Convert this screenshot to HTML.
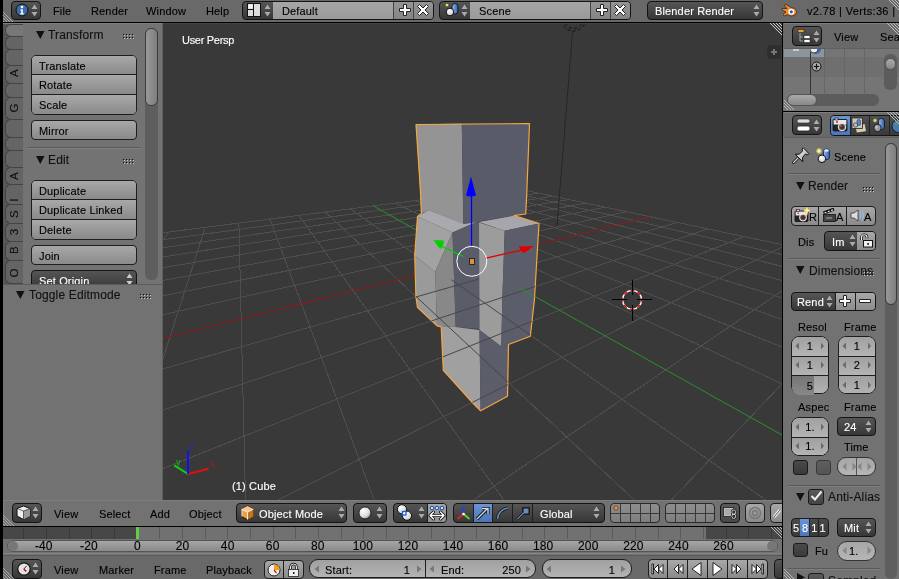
<!DOCTYPE html>
<html><head><meta charset="utf-8">
<style>
*{box-sizing:border-box;margin:0;padding:0}
html,body{width:899px;height:579px;overflow:hidden;background:#000}
body{position:relative;font-family:"Liberation Sans",sans-serif;font-size:11px;color:#000}
.a{position:absolute}
.t{position:absolute;white-space:nowrap;line-height:12px;font-size:11px;letter-spacing:0.15px;-webkit-text-stroke:0.12px currentColor}
.w{color:#fff}
/* widgets */
.btn{position:absolute;border:1px solid #1e1e1e;border-radius:4px;background:linear-gradient(#a8a8a8,#8a8a8a)}
.menu{position:absolute;border:1px solid #141414;border-radius:4px;background:linear-gradient(#555,#373737)}
.num{position:absolute;border:1px solid #1e1e1e;border-radius:9px;background:linear-gradient(#a0a0a0,#b4b4b4)}
.hdr{position:absolute;background:#727272}
.grp{position:absolute;border:1px solid #1e1e1e;border-radius:5px;overflow:hidden;display:flex;flex-direction:column}
.row{background:linear-gradient(#a8a8a8,#8a8a8a);flex:none}
.sep{border-top:1px solid #1e1e1e}
</style></head><body><div id="root" style="position:absolute;left:0;top:0;width:899px;height:579px;will-change:transform">

<!-- ===== top info header ===== -->
<div class="a" style="left:0;top:0;width:899px;height:22px;background:#696969"></div>
<div class="a" style="left:0;top:22px;width:899px;height:1px;background:#000"></div>
<div class="a" style="left:0;top:0;width:3px;height:579px;background:#000"></div>
<!-- corner hatch -->
<svg class="a" style="left:3px;top:10px" width="12" height="12"><path d="M0 2L10 12M0 5L7 12M0 8L4 12M0 11L1 12" stroke="#aaa" stroke-width="1"/></svg>
<!-- info editor button -->
<div class="menu" style="left:11px;top:1px;width:30px;height:19px"></div>
<svg class="a" style="left:15px;top:3px" width="14" height="14"><circle cx="7" cy="7" r="6" fill="#3d6aa8" stroke="#111" stroke-width="1"/><circle cx="7" cy="4" r="1.3" fill="#fff"/><path d="M5.5 6.3h2.3v4h1v1.2h-3.6v-1.2h1v-2.8h-.7z" fill="#fff"/></svg>
<svg class="a" style="left:31px;top:4px" width="7" height="13"><path d="M0.5 5L3.5 0.5L6.5 5z M0.5 8L3.5 12.5L6.5 8z" fill="#aaa"/></svg>
<div class="t" style="left:53px;top:5px">File</div>
<div class="t" style="left:91px;top:5px">Render</div>
<div class="t" style="left:146px;top:5px">Window</div>
<div class="t" style="left:206px;top:5px">Help</div>
<!-- screen layout -->
<div class="menu" style="left:242px;top:1px;width:192px;height:19px"></div>
<div class="a" style="left:273px;top:2px;width:120px;height:17px;background:linear-gradient(#a6a6a6,#9a9a9a)"></div>
<div class="a" style="left:393px;top:2px;width:40px;height:17px;border-radius:0 3px 3px 0;background:linear-gradient(#959595,#848484)"></div>
<div class="a" style="left:413px;top:2px;width:1px;height:17px;background:#444"></div>
<div class="a" style="left:393px;top:2px;width:1px;height:17px;background:#444"></div>
<svg class="a" style="left:247px;top:3px" width="14" height="14"><rect x="0.5" y="0.5" width="6" height="6" fill="#ddd" stroke="#111"/><rect x="0.5" y="6.5" width="6" height="7" fill="#ddd" stroke="#111"/><rect x="6.5" y="0.5" width="7" height="13" fill="#ddd" stroke="#111"/><rect x="1.5" y="1.5" width="4" height="4" fill="#f4f4f4"/></svg>
<svg class="a" style="left:264px;top:4px" width="7" height="13"><path d="M0.5 5L3.5 0.5L6.5 5z M0.5 8L3.5 12.5L6.5 8z" fill="#aaa"/></svg>
<div class="t" style="left:282px;top:5px">Default</div>
<svg class="a" style="left:398px;top:3px" width="14" height="14"><path d="M5.5 1.5h3v4h4v3h-4v4h-3v-4h-4v-3h4z" fill="#fff" stroke="#222" stroke-width="1"/></svg>
<svg class="a" style="left:416px;top:3px" width="14" height="14"><path d="M1.5 3.5L3.5 1.5L7 5L10.5 1.5L12.5 3.5L9 7L12.5 10.5L10.5 12.5L7 9L3.5 12.5L1.5 10.5L5 7z" fill="#fff" stroke="#222" stroke-width="1"/></svg>
<!-- scene -->
<div class="menu" style="left:439px;top:1px;width:192px;height:19px"></div>
<div class="a" style="left:470px;top:2px;width:120px;height:17px;background:linear-gradient(#a6a6a6,#9a9a9a)"></div>
<div class="a" style="left:590px;top:2px;width:40px;height:17px;border-radius:0 3px 3px 0;background:linear-gradient(#959595,#848484)"></div>
<div class="a" style="left:590px;top:2px;width:1px;height:17px;background:#444"></div>
<div class="a" style="left:610px;top:2px;width:1px;height:17px;background:#444"></div>
<svg class="a" style="left:444px;top:2px" width="16" height="16"><defs><linearGradient id="cyl" x1="0" x2="1"><stop offset="0" stop-color="#9cc0f0"/><stop offset="1" stop-color="#2a5ab0"/></linearGradient></defs><circle cx="3" cy="3" r="1.6" fill="#ee6" stroke="#553" stroke-width="0.5"/><rect x="8" y="1.5" width="6" height="10.5" rx="3" fill="url(#cyl)" stroke="#111" stroke-width="0.9"/><circle cx="6" cy="10" r="3.8" fill="url(#wsph)" stroke="#111" stroke-width="1"/></svg>
<svg class="a" style="left:461px;top:4px" width="7" height="13"><path d="M0.5 5L3.5 0.5L6.5 5z M0.5 8L3.5 12.5L6.5 8z" fill="#aaa"/></svg>
<div class="t" style="left:479px;top:5px">Scene</div>
<svg class="a" style="left:595px;top:3px" width="14" height="14"><path d="M5.5 1.5h3v4h4v3h-4v4h-3v-4h-4v-3h4z" fill="#fff" stroke="#222" stroke-width="1"/></svg>
<svg class="a" style="left:613px;top:3px" width="14" height="14"><path d="M1.5 3.5L3.5 1.5L7 5L10.5 1.5L12.5 3.5L9 7L12.5 10.5L10.5 12.5L7 9L3.5 12.5L1.5 10.5L5 7z" fill="#fff" stroke="#222" stroke-width="1"/></svg>
<!-- render engine -->
<div class="menu" style="left:647px;top:1px;width:116px;height:19px"></div>
<div class="t w" style="left:655px;top:5px">Blender Render</div>
<svg class="a" style="left:753px;top:4px" width="7" height="13"><path d="M0.5 5L3.5 0.5L6.5 5z M0.5 8L3.5 12.5L6.5 8z" fill="#aaa"/></svg>
<!-- blender logo -->
<svg class="a" style="left:781px;top:3px" width="17" height="14"><path d="M1 5.5L6 5.5L3 2.5L5 1.5L11 5C15 5 16 8 15.5 10C14.5 13 9 14 6.5 11.5L3.5 13L2 11.5L5 9L1 7z" fill="#f0882a" stroke="#222" stroke-width="0.7"/><circle cx="10.3" cy="8.8" r="3" fill="#fff"/><circle cx="10.3" cy="8.8" r="1.6" fill="#2a5fa8"/></svg>
<div class="t" style="left:807px;top:5px;letter-spacing:0.35px">v2.78 | Verts:36 | </div>
<svg class="a" style="left:887px;top:0px" width="12" height="10"><path d="M2 0L12 10M5 0L12 7M8 0L12 4M11 0L12 1" stroke="#bbb" stroke-width="1"/></svg>

<!-- ===== left tool shelf ===== -->
<div class="a" style="left:3px;top:23px;width:160px;height:477px;background:#727272"></div>
<div class="a" style="left:3px;top:23px;width:160px;height:1px;background:#7e7e7e"></div>
<div class="a" style="left:3px;top:24px;width:20px;height:260px;background:#575757"></div>
<div class="a" style="left:5px;top:24px;width:18px;height:13px;border:1px solid #444;border-right:none;border-radius:6px 0 0 6px;background:#777"></div>
<div class="a" style="left:5px;top:36px;width:18px;height:14px;border:1px solid #444;border-right:none;border-radius:6px 0 0 6px;background:#646464"></div>
<div class="a" style="left:5px;top:49px;width:18px;height:17px;border:1px solid #444;border-right:none;border-radius:6px 0 0 6px;background:#646464"></div>
<div class="a" style="left:5px;top:65px;width:18px;height:19px;border:1px solid #444;border-right:none;border-radius:6px 0 0 6px;background:#646464"></div>
<div class="t" style="left:6px;top:66.5px;width:16px;text-align:center;transform:rotate(-90deg);color:#111;font-size:11.5px">A</div>
<div class="a" style="left:5px;top:83px;width:18px;height:15px;border:1px solid #444;border-right:none;border-radius:6px 0 0 6px;background:#646464"></div>
<div class="a" style="left:5px;top:97px;width:18px;height:23px;border:1px solid #444;border-right:none;border-radius:6px 0 0 6px;background:#646464"></div>
<div class="t" style="left:6px;top:102px;width:16px;text-align:center;transform:rotate(-90deg);color:#111;font-size:11.5px">G</div>
<div class="a" style="left:5px;top:119px;width:18px;height:19px;border:1px solid #444;border-right:none;border-radius:6px 0 0 6px;background:#646464"></div>
<div class="a" style="left:5px;top:137px;width:18px;height:14px;border:1px solid #444;border-right:none;border-radius:6px 0 0 6px;background:#646464"></div>
<div class="a" style="left:5px;top:150px;width:18px;height:18px;border:1px solid #444;border-right:none;border-radius:6px 0 0 6px;background:#646464"></div>
<div class="a" style="left:5px;top:167px;width:18px;height:18px;border:1px solid #444;border-right:none;border-radius:6px 0 0 6px;background:#646464"></div>
<div class="t" style="left:6px;top:170px;width:16px;text-align:center;transform:rotate(-90deg);color:#111;font-size:11.5px">A</div>
<div class="a" style="left:5px;top:184px;width:18px;height:21px;border:1px solid #444;border-right:none;border-radius:6px 0 0 6px;background:#646464"></div>
<div class="t" style="left:6px;top:193.5px;width:16px;text-align:center;transform:rotate(-90deg);color:#111;font-size:11.5px">I</div>
<div class="a" style="left:5px;top:204px;width:18px;height:20px;border:1px solid #444;border-right:none;border-radius:6px 0 0 6px;background:#646464"></div>
<div class="t" style="left:6px;top:208px;width:16px;text-align:center;transform:rotate(-90deg);color:#111;font-size:11.5px">S</div>
<div class="a" style="left:5px;top:223px;width:18px;height:19px;border:1px solid #444;border-right:none;border-radius:6px 0 0 6px;background:#646464"></div>
<div class="t" style="left:6px;top:226px;width:16px;text-align:center;transform:rotate(-90deg);color:#111;font-size:11.5px">3</div>
<div class="a" style="left:5px;top:241px;width:18px;height:20px;border:1px solid #444;border-right:none;border-radius:6px 0 0 6px;background:#646464"></div>
<div class="t" style="left:6px;top:244px;width:16px;text-align:center;transform:rotate(-90deg);color:#111;font-size:11.5px">B</div>
<div class="a" style="left:5px;top:260px;width:18px;height:24px;border:1px solid #444;border-right:none;border-radius:6px 0 0 6px;background:#646464"></div>
<div class="t" style="left:6px;top:267px;width:16px;text-align:center;transform:rotate(-90deg);color:#111;font-size:11.5px">O</div>

<div class="a" style="left:23px;top:24px;width:139px;height:260px;background:#737373"></div>
<div class="a" style="left:162px;top:23px;width:1px;height:477px;background:#606060"></div>
<!-- Transform panel -->
<svg class="a" style="left:36px;top:31px" width="9" height="8"><path d="M0 0H8.5L4.25 8z" fill="#111"/></svg>
<div class="t" style="left:48px;top:29px;font-size:12px;color:#111">Transform</div>
<svg class="a" style="left:123px;top:33px" width="12" height="7"><g fill="#111"><rect x="0" y="1" width="1.2" height="1.2"/><rect x="3" y="1" width="1.2" height="1.2"/><rect x="6" y="1" width="1.2" height="1.2"/><rect x="9" y="1" width="1.2" height="1.2"/><rect x="0" y="4" width="1.2" height="1.2"/><rect x="3" y="4" width="1.2" height="1.2"/><rect x="6" y="4" width="1.2" height="1.2"/><rect x="9" y="4" width="1.2" height="1.2"/></g><g fill="#ccc"><rect x="1" y="2" width="1" height="1"/><rect x="4" y="2" width="1" height="1"/><rect x="7" y="2" width="1" height="1"/><rect x="10" y="2" width="1" height="1"/><rect x="1" y="5" width="1" height="1"/><rect x="4" y="5" width="1" height="1"/><rect x="7" y="5" width="1" height="1"/><rect x="10" y="5" width="1" height="1"/></g></svg>
<div class="grp" style="left:31px;top:55px;width:106px;height:60px">
 <div class="row" style="height:18px"></div><div class="row sep" style="height:20px"></div><div class="row sep" style="height:20px"></div>
</div>
<div class="t" style="left:39px;top:60px">Translate</div>
<div class="t" style="left:39px;top:79px">Rotate</div>
<div class="t" style="left:39px;top:99px">Scale</div>
<div class="btn" style="left:31px;top:120px;width:106px;height:20px"></div>
<div class="t" style="left:39px;top:125px">Mirror</div>
<div class="a" style="left:28px;top:147px;width:112px;height:1px;background:#5a5a5a"></div>
<div class="a" style="left:28px;top:148px;width:112px;height:1px;background:#808080"></div>
<!-- Edit panel -->
<svg class="a" style="left:36px;top:156px" width="9" height="8"><path d="M0 0H8.5L4.25 8z" fill="#111"/></svg>
<div class="t" style="left:48px;top:154px;font-size:12px;color:#111">Edit</div>
<svg class="a" style="left:123px;top:158px" width="12" height="7"><g fill="#111"><rect x="0" y="1" width="1.2" height="1.2"/><rect x="3" y="1" width="1.2" height="1.2"/><rect x="6" y="1" width="1.2" height="1.2"/><rect x="9" y="1" width="1.2" height="1.2"/><rect x="0" y="4" width="1.2" height="1.2"/><rect x="3" y="4" width="1.2" height="1.2"/><rect x="6" y="4" width="1.2" height="1.2"/><rect x="9" y="4" width="1.2" height="1.2"/></g><g fill="#ccc"><rect x="1" y="2" width="1" height="1"/><rect x="4" y="2" width="1" height="1"/><rect x="7" y="2" width="1" height="1"/><rect x="10" y="2" width="1" height="1"/><rect x="1" y="5" width="1" height="1"/><rect x="4" y="5" width="1" height="1"/><rect x="7" y="5" width="1" height="1"/><rect x="10" y="5" width="1" height="1"/></g></svg>
<div class="grp" style="left:31px;top:180px;width:106px;height:60px">
 <div class="row" style="height:18px"></div><div class="row sep" style="height:20px"></div><div class="row sep" style="height:20px"></div>
</div>
<div class="t" style="left:39px;top:185px">Duplicate</div>
<div class="t" style="left:39px;top:204px">Duplicate Linked</div>
<div class="t" style="left:39px;top:224px">Delete</div>
<div class="btn" style="left:31px;top:245px;width:106px;height:20px"></div>
<div class="t" style="left:39px;top:250px">Join</div>
<div class="menu" style="left:31px;top:270px;width:106px;height:20px"></div>
<div class="t w" style="left:39px;top:275px">Set Origin</div>
<svg class="a" style="left:126px;top:273px" width="7" height="13"><path d="M0.5 5L3.5 0.5L6.5 5z M0.5 8L3.5 12.5L6.5 8z" fill="#ccc"/></svg>
<!-- scrollbar -->
<div class="a" style="left:145px;top:28px;width:13px;height:252px;border-radius:6px;background:#5e5e5e"></div>
<div class="a" style="left:145px;top:28px;width:13px;height:78px;border-radius:6px;border:1px solid #3a3a3a;background:linear-gradient(90deg,#999,#7e7e7e)"></div>
<!-- Toggle Editmode (redo panel) -->
<div class="a" style="left:3px;top:284px;width:159px;height:216px;background:#727272"></div>
<div class="a" style="left:3px;top:284px;width:159px;height:1px;background:#5c5c5c"></div>
<svg class="a" style="left:16px;top:291px" width="9" height="8"><path d="M0 0H8.5L4.25 8z" fill="#111"/></svg>
<div class="t" style="left:29px;top:289px;font-size:12px;color:#111">Toggle Editmode</div>
<svg class="a" style="left:140px;top:293px" width="12" height="7"><g fill="#111"><rect x="0" y="1" width="1.2" height="1.2"/><rect x="3" y="1" width="1.2" height="1.2"/><rect x="6" y="1" width="1.2" height="1.2"/><rect x="9" y="1" width="1.2" height="1.2"/><rect x="0" y="4" width="1.2" height="1.2"/><rect x="3" y="4" width="1.2" height="1.2"/><rect x="6" y="4" width="1.2" height="1.2"/><rect x="9" y="4" width="1.2" height="1.2"/></g><g fill="#ccc"><rect x="1" y="2" width="1" height="1"/><rect x="4" y="2" width="1" height="1"/><rect x="7" y="2" width="1" height="1"/><rect x="10" y="2" width="1" height="1"/><rect x="1" y="5" width="1" height="1"/><rect x="4" y="5" width="1" height="1"/><rect x="7" y="5" width="1" height="1"/><rect x="10" y="5" width="1" height="1"/></g></svg>

<!-- ===== viewport ===== -->
<div class="a" style="left:163px;top:23px;width:620px;height:477px;background:#393939;overflow:hidden">
<svg width="620" height="477" viewBox="163 23 620 477" style="position:absolute;left:0;top:0">
 <path d="M1757.2 6826.6L1051.5 301.6M-6567.9 6907.1L128.3 237.2M-1833.3 6861.3L963.4 283.0M-4246.2 6884.6L168.4 232.1M-5423.8 6896.0L892.5 268.0M-1924.6 6862.2L205.2 227.4M-1432.8 1792.2L834.2 255.7M397.1 6839.7L238.9 223.1M-555.5 918.3L785.4 245.3M1360.3 3156.9L270.0 219.1M-282.6 646.5L744.0 236.6M1173.4 1429.1L298.8 215.4M-149.5 513.9L708.4 229.0M1122.1 954.8L325.4 212.0M-70.8 435.5L677.5 222.5M1098.2 733.0L350.2 208.8M18.3 346.8L626.3 211.7M1075.2 520.6L394.9 203.1M45.9 319.2L605.0 207.2M1068.8 461.5L415.2 200.5M67.4 297.9L585.9 203.1M1064.1 417.7L434.1 198.1M84.5 280.9L568.6 199.5M1060.4 383.9L452.0 195.8M98.4 267.0L553.0 196.2M1057.5 357.0L468.8 193.7M110.0 255.4L538.8 193.2M1055.1 335.1L484.7 191.6M119.9 245.6L525.8 190.4M1053.2 316.9L499.7 189.7M128.3 237.2L513.9 187.9M1051.5 301.6L513.9 187.9" stroke="#4e4e4e" stroke-width="1" fill="none" shape-rendering="crispEdges"/>
 <path d="M-18.7 383.6L650.3 216.8" stroke="#8c1a1a" stroke-width="1" fill="none" shape-rendering="crispEdges"/>
 <path d="M1084.3 604.5L373.3 205.9" stroke="#2c8f2c" stroke-width="1" fill="none"/>
 <!-- lamp line -->
 <path d="M572.6 31L557 226" stroke="#262626" stroke-width="1" fill="none"/>
 <circle cx="573.5" cy="19" r="9.5" stroke="#111" stroke-width="1" stroke-dasharray="3 2.5" fill="none"/>
 <circle cx="573.5" cy="19" r="12" stroke="#111" stroke-width="1" stroke-dasharray="3 2.5" fill="none"/>
 <!-- object -->
 <g stroke="none">
  <polygon fill="#949494" points="416,124.5 461.8,123.5 463.3,224 428.4,210 421.4,213.4 420,190"/>
  <polygon fill="#5a5b69" points="461.8,123.5 529.5,123.6 525.7,214 514,215.7 476.6,222 463.3,224"/>
  <polygon fill="#a9a9af" points="417.5,216.5 428.4,210 464,224 476.6,222 452.5,232.4"/>
  <polygon fill="#a2a2a2" points="417.5,216.5 452.5,232.4 435.2,271.9 414.7,255.4"/>
  <polygon fill="#9a9a9a" points="414.7,255.4 435.2,271.9 437.1,325.9 417.4,307.2 415.9,296.5"/>
  <polygon fill="#888888" points="452.5,232.4 455.7,327 437.1,325.9 435.2,271.9"/>
  <polygon fill="#5b5c69" points="452.5,232.4 476.6,222 479.5,222.5 479.5,329 455.7,327"/>
  <polygon fill="#a6a6ac" points="479,222 514,215.7 539,223.5 504.7,230.8"/>
  <polygon fill="#9c9c9c" points="479,222.5 504.7,230.8 502.3,300 501.3,346.6 479.5,330"/>
  <polygon fill="#5c5d6b" points="504.7,230.8 539,223.5 534.4,300 530.3,336.2 508.5,344.5 501.3,346.6 502.3,300"/>
  <polygon fill="#a0a0a0" points="437.1,325.9 455.7,327 479.5,330 480.6,410.8 473.3,403.5 443.3,370.4 441.2,326.9"/>
  <polygon fill="#5c5d6b" points="479.5,330 501.3,346.6 508.5,344.5 507.5,396.3 480.6,410.8"/>
 </g>
 <polygon fill="none" stroke="#f5a742" stroke-width="1.2" stroke-linejoin="round" points="416,124.5 529.5,123.6 526.7,195 525.7,214 514,215.5 539,223.5 534.4,300 530.3,336.2 508.5,344.5 507.5,396.3 480.6,410.8 473.3,403.5 443.3,370.4 441.2,326.9 437.1,325.9 417.4,307.2 415.9,296.5 414.7,255.4 417.5,216.5 421.4,213.4 420.3,188"/>
 <!-- grid over lower object -->
 <clipPath id="lowclip"><polygon points="410,291 478.7,272 479,286 502.5,286 502.5,291 545,281 545,420 410,420"/></clipPath>
 <clipPath id="objclip"><polygon points="416,124.5 529.5,123.6 526.7,195 525.7,214 514,215.5 539,223.5 534.4,300 530.3,336.2 508.5,344.5 507.5,396.3 480.6,410.8 473.3,403.5 443.3,370.4 441.2,326.9 437.1,325.9 417.4,307.2 415.9,296.5 414.7,255.4 417.5,216.5 421.4,213.4 420.3,188"/></clipPath>
 <g clip-path="url(#objclip)"><g clip-path="url(#lowclip)"><path d="M1757.2 6826.6L1051.5 301.6M-6567.9 6907.1L128.3 237.2M-1833.3 6861.3L963.4 283.0M-4246.2 6884.6L168.4 232.1M-5423.8 6896.0L892.5 268.0M-1924.6 6862.2L205.2 227.4M-1432.8 1792.2L834.2 255.7M397.1 6839.7L238.9 223.1M-555.5 918.3L785.4 245.3M1360.3 3156.9L270.0 219.1M-282.6 646.5L744.0 236.6M1173.4 1429.1L298.8 215.4M-149.5 513.9L708.4 229.0M1122.1 954.8L325.4 212.0M-70.8 435.5L677.5 222.5M1098.2 733.0L350.2 208.8M18.3 346.8L626.3 211.7M1075.2 520.6L394.9 203.1M45.9 319.2L605.0 207.2M1068.8 461.5L415.2 200.5M67.4 297.9L585.9 203.1M1064.1 417.7L434.1 198.1M84.5 280.9L568.6 199.5M1060.4 383.9L452.0 195.8M98.4 267.0L553.0 196.2M1057.5 357.0L468.8 193.7M110.0 255.4L538.8 193.2M1055.1 335.1L484.7 191.6M119.9 245.6L525.8 190.4M1053.2 316.9L499.7 189.7M128.3 237.2L513.9 187.9M1051.5 301.6L513.9 187.9" stroke="#474747" stroke-width="1" fill="none"/><path d="M1084.3 604.5L373.3 205.9" stroke="#2c8f2c" stroke-width="1" fill="none"/></g></g>
 <!-- manipulator -->
 <line x1="471.5" y1="246" x2="471.5" y2="195" stroke="#0000ff" stroke-width="1.3"/>
 <path fill="#0000ff" d="M471 176.5L466 195.5Q471 197.5 476 195.5z"/>
 <line x1="463.5" y1="256.5" x2="441" y2="246" stroke="#00d000" stroke-width="1.3"/>
 <path fill="#00d000" d="M433.5 240L443.5 240.5Q444.5 246 440 249z"/>
 <line x1="485" y1="258.3" x2="523" y2="249.8" stroke="#e00000" stroke-width="1.3"/>
 <path fill="#e00000" d="M534 246L519 246.5Q520 251 524 253z"/>
 <circle cx="471.8" cy="261.3" r="15" stroke="#fff" stroke-width="1" fill="none"/>
 <rect x="469.5" y="258.5" width="5" height="6" fill="#d8923a" stroke="#2a2a2a" stroke-width="1"/>
 <!-- 3d cursor -->
 <circle cx="632.1" cy="299.8" r="9.5" stroke="#fff" stroke-width="1.3" fill="none"/>
 <circle cx="632.1" cy="299.8" r="9.5" stroke="#e00000" stroke-width="1.3" fill="none" stroke-dasharray="3.73 3.73" stroke-dashoffset="1.9"/>
 <path d="M612 299.5h14.5M637 299.5h15M632.5 280v15M632.5 305v16" stroke="#000" stroke-width="1" shape-rendering="crispEdges"/>
</svg>
</div>

<!-- viewport overlays -->
<div class="a" style="left:163px;top:23px;width:619px;height:1px;background:#434343"></div>
<div class="t w" style="left:182px;top:34px;letter-spacing:-0.3px">User Persp</div>
<div class="t w" style="left:232px;top:480px">(1) Cube</div>
<svg class="a" style="left:165px;top:435px" width="60" height="45">
 <path d="M23 39L43.4 33.7" stroke="#e01010" stroke-width="2"/>
 <path d="M23 39L9.3 30.4" stroke="#10d010" stroke-width="2"/>
 <path d="M23 39V15.7" stroke="#1010f0" stroke-width="2"/>
 <text x="45.5" y="31.5" font-size="9" fill="#c01010" font-family="Liberation Sans">x</text>
 <text x="11" y="30" font-size="9" fill="#10c010" font-family="Liberation Sans">y</text>
 <text x="24.5" y="13.5" font-size="9" fill="#2020e0" font-family="Liberation Sans">z</text>
</svg>
<div class="a" style="left:767px;top:45px;width:14px;height:14px;border-radius:4px 0 0 4px;background:#2e2e2e"></div>
<svg class="a" style="left:770px;top:48px" width="8" height="8"><path d="M4 1v6M1 4h6" stroke="#777" stroke-width="2"/></svg>
<svg class="a" style="left:769px;top:23px" width="13" height="13"><path d="M1 0L13 12M4 0L13 9M7 0L13 6M10 0L13 3" stroke="#ccc" stroke-width="1"/></svg>
<!-- ===== right: outliner + properties ===== -->
<div class="a" style="left:782px;top:23px;width:1px;height:556px;background:#000"></div>
<div class="a" style="left:783px;top:23px;width:116px;height:88px;background:#727272"></div>
<div class="a" style="left:783px;top:111px;width:116px;height:1px;background:#000"></div>
<div class="a" style="left:783px;top:112px;width:116px;height:467px;background:#727272"></div>
<!-- outliner -->
<div class="a" style="left:783px;top:23px;width:116px;height:25px;background:#696969"></div>
<div class="a" style="left:784px;top:23px;width:115px;height:1px;background:#7e7e7e"></div>
<div class="a" style="left:784px;top:48px;width:115px;height:1px;background:#5e5e5e"></div>
<div class="a" style="left:784px;top:49px;width:115px;height:8px;background:#757575"></div>
<div class="a" style="left:784px;top:49px;width:40px;height:8px;background:#8c949c"></div>
<div class="a" style="left:784px;top:57px;width:115px;height:20px;background:#6f6f6f"></div>
<div class="a" style="left:784px;top:77px;width:115px;height:34px;background:#757575"></div>
<div class="a" style="left:824px;top:49px;width:1px;height:45px;background:#666"></div>
<div class="a" style="left:844px;top:49px;width:1px;height:45px;background:#666"></div>
<div class="a" style="left:864px;top:49px;width:1px;height:45px;background:#666"></div>
<div class="a" style="left:810px;top:49px;width:1px;height:45px;background:#333"></div>
<svg class="a" style="left:790px;top:49px" width="50" height="8"><path d="M3 1h6" stroke="#ddd" stroke-width="1.5"/><circle cx="24" cy="-1" r="5" fill="#ccc"/><circle cx="26" cy="0" r="5" fill="#3a6ac0"/><circle cx="24" cy="0" r="4" fill="#eee" stroke="#222" stroke-width="0.8"/></svg>
<svg class="a" style="left:811px;top:61px" width="11" height="11"><circle cx="5.5" cy="5.5" r="4.5" fill="#aaa" stroke="#111" stroke-width="1"/><path d="M5.5 2.8v5.4M2.8 5.5h5.4" stroke="#111" stroke-width="1.2"/></svg>
<div class="menu" style="left:792px;top:26px;width:30px;height:20px"></div>
<svg class="a" style="left:797px;top:29px" width="16" height="14"><rect x="1" y="0.5" width="6" height="3" fill="#f0a030" stroke="#222" stroke-width="0.6"/><path d="M3 4v8M3 8h3M3 12h3" stroke="#8ab" stroke-width="1"/><rect x="7" y="6.5" width="6" height="3" fill="#fff" stroke="#222" stroke-width="0.6"/><rect x="7" y="10.5" width="6" height="3" fill="#fff" stroke="#222" stroke-width="0.6"/></svg>
<svg class="a" style="left:813px;top:30px" width="7" height="13"><path d="M0.5 5L3.5 0.5L6.5 5z M0.5 8L3.5 12.5L6.5 8z" fill="#aaa"/></svg>
<div class="t" style="left:834px;top:31px">View</div>
<div class="t" style="left:880px;top:31px">Search</div>
<div class="a" style="left:884px;top:54px;width:13px;height:36px;border-radius:6px;background:#5c5c5c"></div>
<div class="a" style="left:885px;top:58px;width:11px;height:12px;border-radius:6px;background:linear-gradient(#aaa,#888);border:1px solid #555"></div>
<div class="a" style="left:787px;top:94px;width:92px;height:12px;border-radius:6px;background:#5c5c5c"></div>
<div class="a" style="left:787px;top:94px;width:30px;height:12px;border-radius:6px;background:linear-gradient(#aaa,#888);border:1px solid #555"></div>
<svg class="a" style="left:784px;top:99px" width="11" height="11"><path d="M0 1L10 11M0 4L7 11M0 7L4 11" stroke="#bbb" stroke-width="1"/></svg>
<svg class="a" style="left:886px;top:23px" width="13" height="13"><path d="M1 0L13 12M4 0L13 9M7 0L13 6M10 0L13 3" stroke="#bbb" stroke-width="1"/></svg>
<!-- properties header -->
<div class="a" style="left:783px;top:112px;width:116px;height:25px;background:#696969"></div>
<div class="a" style="left:784px;top:112px;width:115px;height:1px;background:#7e7e7e"></div>
<div class="a" style="left:784px;top:137px;width:115px;height:1px;background:#5e5e5e"></div>
<div class="menu" style="left:792px;top:115px;width:30px;height:20px"></div>
<svg class="a" style="left:796px;top:118px" width="16" height="14"><rect x="1" y="1" width="13" height="4" rx="2" fill="#ddd" stroke="#222" stroke-width="0.6"/><rect x="1" y="8" width="13" height="5" rx="2" fill="#fff" stroke="#222" stroke-width="0.8"/></svg>
<svg class="a" style="left:813px;top:119px" width="7" height="13"><path d="M0.5 5L3.5 0.5L6.5 5z M0.5 8L3.5 12.5L6.5 8z" fill="#aaa"/></svg>
<div class="a" style="left:830px;top:115px;width:75px;height:21px;border:1px solid #141414;border-radius:4px;background:linear-gradient(#4f4f4f,#3a3a3a)"></div>
<div class="a" style="left:831px;top:116px;width:19px;height:19px;border-radius:3px 0 0 3px;background:linear-gradient(#6a94d6,#4b76b8)"></div>
<div class="a" style="left:850px;top:116px;width:1px;height:19px;background:#222"></div>
<div class="a" style="left:869px;top:116px;width:1px;height:19px;background:#222"></div>
<div class="a" style="left:889px;top:116px;width:1px;height:19px;background:#222"></div>
<svg class="a" style="left:832px;top:117px" width="17" height="16"><rect x="1" y="2.5" width="14" height="11.5" rx="1" fill="#222" stroke="#111" stroke-width="0.8"/><rect x="1.6" y="3" width="12.8" height="4.5" fill="#e6e6e6"/><rect x="3" y="1" width="3" height="2" fill="#ddd" stroke="#111" stroke-width="0.6"/><circle cx="5" cy="5" r="0.9" fill="#e00"/><circle cx="10" cy="10" r="3.8" fill="#666" stroke="#eee" stroke-width="1"/><circle cx="10" cy="10" r="2.2" fill="#6a2020"/><circle cx="9" cy="9" r="0.8" fill="#8ab"/></svg>
<svg class="a" style="left:851px;top:117px" width="17" height="17"><path d="M4 9L14 6.5L15.5 14.5L5.5 16z" fill="#d8ceb0" stroke="#222" stroke-width="0.6"/><rect x="1" y="1" width="10.5" height="10.5" fill="#c8c8c8" stroke="#222" stroke-width="0.8"/><rect x="6" y="2.5" width="3.5" height="6" rx="1.6" fill="#5a88c8" stroke="#222" stroke-width="0.5"/><circle cx="4.5" cy="8" r="2.2" fill="#bbb" stroke="#222" stroke-width="0.6"/><circle cx="2.5" cy="2.5" r="0.9" fill="#cc6"/></svg>
<svg class="a" style="left:871px;top:116px" width="17" height="17"><circle cx="4" cy="4.5" r="1.8" fill="#dde070" stroke="#776" stroke-width="0.6"/><rect x="7.5" y="2.5" width="6" height="11" rx="2.8" fill="url(#cyl)" stroke="#111" stroke-width="0.8"/><circle cx="6.5" cy="12" r="3.7" fill="#999" stroke="#111" stroke-width="0.9"/><circle cx="5.5" cy="11" r="1.6" fill="#bbb"/></svg>
<svg class="a" style="left:890px;top:117px" width="10" height="16"><circle cx="8.5" cy="9" r="6.5" fill="#4a78b0" stroke="#111" stroke-width="0.8"/><path d="M5 6Q7 5 8 7Q7 9 5 8z M9 11Q11 10 12 12Q10 14 9 12z" fill="#5a9a40"/></svg>
<svg class="a" style="left:886px;top:112px" width="13" height="13"><path d="M1 0L13 12M4 0L13 9M7 0L13 6M10 0L13 3" stroke="#bbb" stroke-width="1"/></svg>
<!-- properties content -->
<svg class="a" style="left:792px;top:146px" width="18" height="18"><defs><linearGradient id="pin" x1="0" y1="0" x2="1" y2="1"><stop offset="0" stop-color="#fff"/><stop offset="1" stop-color="#999"/></linearGradient></defs><path d="M1.5 16.5L6.5 11.5" stroke="#111" stroke-width="2.6" stroke-linecap="round"/><path d="M1.5 16.5L6.5 11.5" stroke="#ddd" stroke-width="1.1" stroke-linecap="round"/><path d="M3.2 8.2L10.8 15.8L10.5 11.5L13.5 8L15.8 8.8L16.8 7.5L11.2 1.8L10 3L10.5 5.2L7 8.3z" fill="url(#pin)" stroke="#111" stroke-width="1" stroke-linejoin="round"/></svg>
<svg class="a" style="left:815px;top:147px" width="17" height="16"><circle cx="4" cy="4" r="2.3" fill="#eee" stroke="#b8b840" stroke-width="1.2"/><rect x="8.5" y="2" width="6" height="10.5" rx="2.5" fill="url(#cyl)" stroke="#14306a" stroke-width="1"/><ellipse cx="11.5" cy="3.5" rx="2.3" ry="1.2" fill="#dde8f8"/><circle cx="7" cy="11.8" r="3.8" fill="url(#wsph)" stroke="#111" stroke-width="1"/></svg>
<div class="t" style="left:834px;top:151px">Scene</div>
<div class="a" style="left:788px;top:173px;width:92px;height:1px;background:#5a5a5a"></div><div class="a" style="left:788px;top:174px;width:92px;height:1px;background:#7e7e7e"></div>
<svg class="a" style="left:796px;top:182px" width="9" height="8"><path d="M0 0H8.5L4.25 8z" fill="#111"/></svg>
<div class="t" style="left:808px;top:180px;font-size:12px;color:#111">Render</div>
<svg class="a" style="left:863px;top:186px" width="12" height="7"><g fill="#111"><rect x="0" y="1" width="1.2" height="1.2"/><rect x="3" y="1" width="1.2" height="1.2"/><rect x="6" y="1" width="1.2" height="1.2"/><rect x="9" y="1" width="1.2" height="1.2"/><rect x="0" y="4" width="1.2" height="1.2"/><rect x="3" y="4" width="1.2" height="1.2"/><rect x="6" y="4" width="1.2" height="1.2"/><rect x="9" y="4" width="1.2" height="1.2"/></g><g fill="#ccc"><rect x="1" y="2" width="1" height="1"/><rect x="4" y="2" width="1" height="1"/><rect x="7" y="2" width="1" height="1"/><rect x="10" y="2" width="1" height="1"/><rect x="1" y="5" width="1" height="1"/><rect x="4" y="5" width="1" height="1"/><rect x="7" y="5" width="1" height="1"/><rect x="10" y="5" width="1" height="1"/></g></svg>
<div class="btn" style="left:791px;top:206px;width:85px;height:20px"></div>
<div class="a" style="left:818px;top:207px;width:1px;height:18px;background:#1e1e1e"></div>
<div class="a" style="left:846px;top:207px;width:1px;height:18px;background:#1e1e1e"></div>
<svg class="a" style="left:794px;top:207px" width="17" height="16"><rect x="1" y="4" width="13" height="10.5" rx="1" fill="#222" stroke="#111" stroke-width="0.8"/><rect x="1.6" y="4.5" width="11.8" height="4" fill="#e6e6e6"/><rect x="2.5" y="2.6" width="3" height="2" fill="#ddd" stroke="#111" stroke-width="0.6"/><circle cx="4.2" cy="6.3" r="0.8" fill="#e00"/><circle cx="9" cy="10.5" r="3.5" fill="#666" stroke="#eee" stroke-width="1"/><circle cx="9" cy="10.5" r="2" fill="#6a2020"/><path d="M13 0.5v6M10 3.5h6" stroke="#ffe040" stroke-width="1.8"/><path d="M13 1.5v4M11 3.5h4" stroke="#fffbd0" stroke-width="0.8"/></svg>
<div class="t" style="left:809px;top:211px">R</div>
<svg class="a" style="left:822px;top:208px" width="16" height="15"><rect x="1.5" y="6.5" width="12" height="7" fill="#444" stroke="#111" stroke-width="0.8"/><path d="M1.5 5L12 1" stroke="#111" stroke-width="3"/><path d="M2.5 5L11 1.8" stroke="#eee" stroke-width="1.2" stroke-dasharray="2 1.5"/><path d="M4 10h6" stroke="#aaa" stroke-width="1"/></svg>
<div class="t" style="left:836px;top:211px">A</div>
<svg class="a" style="left:850px;top:208px" width="16" height="15"><path d="M1 5h3l4-3v11l-4-3H1z" fill="#ddd" stroke="#222" stroke-width="0.7"/><path d="M10 4Q12 7.5 10 11M12 2.5Q15 7.5 12 12.5" stroke="#9bd" stroke-width="1.2" fill="none"/></svg>
<div class="t" style="left:864px;top:211px">A</div>
<div class="t" style="left:798px;top:236px">Dis</div>
<div class="menu" style="left:824px;top:231px;width:52px;height:20px"></div>
<div class="a" style="left:857px;top:232px;width:18px;height:18px;border-radius:0 3px 3px 0;background:linear-gradient(#a8a8a8,#8c8c8c)"></div>
<div class="t w" style="left:832px;top:236px">Im</div>
<svg class="a" style="left:849px;top:234px" width="7" height="13"><path d="M0.5 5L3.5 0.5L6.5 5z M0.5 8L3.5 12.5L6.5 8z" fill="#aaa"/></svg>
<svg class="a" style="left:859px;top:233px" width="15" height="16"><path d="M2.5 7V4.5A2.7 2.7 0 0 1 8 4.5V5.5" stroke="#111" stroke-width="2.6" fill="none"/><path d="M2.5 7V4.5A2.7 2.7 0 0 1 8 4.5V5.5" stroke="#f0f0f0" stroke-width="1.1" fill="none"/><rect x="4.5" y="7.5" width="9" height="6.5" fill="#f0f0f0" stroke="#111" stroke-width="1"/><rect x="8.3" y="10" width="1.6" height="1.8" fill="#111"/></svg>
<div class="a" style="left:788px;top:258px;width:92px;height:1px;background:#5a5a5a"></div><div class="a" style="left:788px;top:259px;width:92px;height:1px;background:#7e7e7e"></div>
<svg class="a" style="left:796px;top:266px" width="9" height="8"><path d="M0 0H8.5L4.25 8z" fill="#111"/></svg>
<div class="t" style="left:809px;top:265px;font-size:12px;color:#111">Dimensions</div>
<svg class="a" style="left:863px;top:270px" width="12" height="7"><g fill="#111"><rect x="0" y="1" width="1.2" height="1.2"/><rect x="3" y="1" width="1.2" height="1.2"/><rect x="6" y="1" width="1.2" height="1.2"/><rect x="9" y="1" width="1.2" height="1.2"/><rect x="0" y="4" width="1.2" height="1.2"/><rect x="3" y="4" width="1.2" height="1.2"/><rect x="6" y="4" width="1.2" height="1.2"/><rect x="9" y="4" width="1.2" height="1.2"/></g><g fill="#ccc"><rect x="1" y="2" width="1" height="1"/><rect x="4" y="2" width="1" height="1"/><rect x="7" y="2" width="1" height="1"/><rect x="10" y="2" width="1" height="1"/><rect x="1" y="5" width="1" height="1"/><rect x="4" y="5" width="1" height="1"/><rect x="7" y="5" width="1" height="1"/><rect x="10" y="5" width="1" height="1"/></g></svg>
<div class="menu" style="left:791px;top:292px;width:85px;height:19px"></div>
<div class="a" style="left:835px;top:293px;width:40px;height:17px;border-radius:0 3px 3px 0;background:linear-gradient(#a8a8a8,#8c8c8c)"></div>
<div class="a" style="left:855px;top:293px;width:1px;height:17px;background:#1e1e1e"></div>
<div class="a" style="left:835px;top:293px;width:1px;height:17px;background:#1e1e1e"></div>
<div class="t w" style="left:797px;top:296px">Rend</div>
<svg class="a" style="left:826px;top:295px" width="7" height="13"><path d="M0.5 5L3.5 0.5L6.5 5z M0.5 8L3.5 12.5L6.5 8z" fill="#aaa"/></svg>
<svg class="a" style="left:838px;top:294px" width="14" height="14"><path d="M5.5 1.5h3v4h4v3h-4v4h-3v-4h-4v-3h4z" fill="#fff" stroke="#222" stroke-width="1"/></svg>
<svg class="a" style="left:858px;top:294px" width="14" height="14"><path d="M1.5 5.5h11v3h-11z" fill="#fff" stroke="#222" stroke-width="1"/></svg>
<div class="t" style="left:798px;top:321px">Resol</div>
<div class="t" style="left:844px;top:321px">Frame</div>
<div class="a" style="left:791px;top:336px;width:38px;height:58px;border:1px solid #1e1e1e;border-radius:8px;overflow:hidden;background:#b4b4b4">
<div class="a" style="left:0;top:-1.0px;width:100%;height:19.5px;background:linear-gradient(#a0a0a0,#b4b4b4);"></div>
<div class="a" style="left:0;top:18.5px;width:100%;height:19.5px;background:linear-gradient(#a0a0a0,#b4b4b4);border-top:1px solid #1e1e1e"></div>
<div class="a" style="left:0;top:38.0px;width:100%;height:19.5px;background:linear-gradient(#a0a0a0,#b4b4b4);border-top:1px solid #1e1e1e"></div>
</div>
<div class="t" style="left:791px;top:340px;width:38px;text-align:center">1</div>
<svg class="a" style="left:795px;top:342px" width="30" height="8"><path d="M4 0.5L0.5 4L4 7.5z" fill="#6a6a6a"/><path d="M26 0.5L29 4L26 7.5z" fill="#6a6a6a"/></svg>
<div class="t" style="left:791px;top:359px;width:38px;text-align:center">1</div>
<svg class="a" style="left:795px;top:361px" width="30" height="8"><path d="M4 0.5L0.5 4L4 7.5z" fill="#6a6a6a"/><path d="M26 0.5L29 4L26 7.5z" fill="#6a6a6a"/></svg>
<div class="t" style="left:791px;top:379px;width:38px;text-align:center">5</div>
<div class="a" style="left:792px;top:376px;width:22px;height:19px;border-radius:0 0 0 8px;background:linear-gradient(#767676,#888)"></div><div class="t" style="left:791px;top:380px;width:38px;text-align:center">5</div>
<div class="a" style="left:838px;top:336px;width:38px;height:58px;border:1px solid #1e1e1e;border-radius:8px;overflow:hidden;background:#b4b4b4">
<div class="a" style="left:0;top:-1.0px;width:100%;height:19.5px;background:linear-gradient(#a0a0a0,#b4b4b4);"></div>
<div class="a" style="left:0;top:18.5px;width:100%;height:19.5px;background:linear-gradient(#a0a0a0,#b4b4b4);border-top:1px solid #1e1e1e"></div>
<div class="a" style="left:0;top:38.0px;width:100%;height:19.5px;background:linear-gradient(#a0a0a0,#b4b4b4);border-top:1px solid #1e1e1e"></div>
</div>
<div class="t" style="left:838px;top:340px;width:38px;text-align:center">1</div>
<svg class="a" style="left:842px;top:342px" width="30" height="8"><path d="M4 0.5L0.5 4L4 7.5z" fill="#6a6a6a"/><path d="M26 0.5L29 4L26 7.5z" fill="#6a6a6a"/></svg>
<div class="t" style="left:838px;top:359px;width:38px;text-align:center">2</div>
<svg class="a" style="left:842px;top:361px" width="30" height="8"><path d="M4 0.5L0.5 4L4 7.5z" fill="#6a6a6a"/><path d="M26 0.5L29 4L26 7.5z" fill="#6a6a6a"/></svg>
<div class="t" style="left:838px;top:379px;width:38px;text-align:center">1</div>
<svg class="a" style="left:842px;top:381px" width="30" height="8"><path d="M4 0.5L0.5 4L4 7.5z" fill="#6a6a6a"/><path d="M26 0.5L29 4L26 7.5z" fill="#6a6a6a"/></svg>
<div class="t" style="left:798px;top:401px">Aspec</div>
<div class="t" style="left:844px;top:401px">Frame</div>
<div class="a" style="left:791px;top:417px;width:38px;height:39px;border:1px solid #1e1e1e;border-radius:8px;overflow:hidden;background:#b4b4b4">
<div class="a" style="left:0;top:-1.0px;width:100%;height:19.5px;background:linear-gradient(#a0a0a0,#b4b4b4);"></div>
<div class="a" style="left:0;top:18.5px;width:100%;height:19.5px;background:linear-gradient(#a0a0a0,#b4b4b4);border-top:1px solid #1e1e1e"></div>
</div>
<div class="t" style="left:791px;top:421px;width:38px;text-align:center">1.</div>
<svg class="a" style="left:795px;top:423px" width="30" height="8"><path d="M4 0.5L0.5 4L4 7.5z" fill="#6a6a6a"/><path d="M26 0.5L29 4L26 7.5z" fill="#6a6a6a"/></svg>
<div class="t" style="left:791px;top:440px;width:38px;text-align:center">1.</div>
<svg class="a" style="left:795px;top:442px" width="30" height="8"><path d="M4 0.5L0.5 4L4 7.5z" fill="#6a6a6a"/><path d="M26 0.5L29 4L26 7.5z" fill="#6a6a6a"/></svg>
<div class="menu" style="left:837px;top:417px;width:39px;height:19px"></div>
<div class="t w" style="left:844px;top:421px">24</div>
<svg class="a" style="left:865px;top:420px" width="7" height="13"><path d="M0.5 5L3.5 0.5L6.5 5z M0.5 8L3.5 12.5L6.5 8z" fill="#aaa"/></svg>
<div class="t" style="left:844px;top:441px">Time</div>
<div class="a" style="left:793px;top:460px;width:15px;height:15px;border:1px solid #1a1a1a;border-radius:3px;background:linear-gradient(#4a4a4a,#3a3a3a)"></div>
<div class="a" style="left:816px;top:460px;width:15px;height:15px;border:1px solid #3a3a3a;border-radius:3px;background:linear-gradient(#5e5e5e,#545454)"></div>
<div class="a" style="left:837px;top:457px;width:39px;height:19px;border:1px solid #333;border-radius:9px;background:linear-gradient(#a6a6a6,#b6b6b6)"></div>
<div class="a" style="left:856px;top:458px;width:1px;height:17px;background:#555"></div>
<svg class="a" style="left:842px;top:462px" width="30" height="9"><path d="M4.5 0.5L0.5 4.5L4.5 8.5z M10.5 0.5L14.5 4.5L10.5 8.5z" fill="#888"/><path d="M19.5 0.5L15.5 4.5L19.5 8.5z M25.5 0.5L29.5 4.5L25.5 8.5z" fill="#888"/></svg>
<div class="a" style="left:788px;top:485px;width:92px;height:1px;background:#5a5a5a"></div><div class="a" style="left:788px;top:486px;width:92px;height:1px;background:#7e7e7e"></div>
<svg class="a" style="left:796px;top:493px" width="9" height="8"><path d="M0 0H8.5L4.25 8z" fill="#111"/></svg>
<div class="a" style="left:808px;top:489px;width:16px;height:16px;border:1px solid #1a1a1a;border-radius:3px;background:linear-gradient(#5a5a5a,#444)"></div>
<svg class="a" style="left:809px;top:489px" width="14" height="14"><path d="M2.5 7L6 10.5L12.5 2.5" stroke="#eee" stroke-width="2" fill="none"/></svg>
<div class="t" style="left:828px;top:491px;font-size:12px;color:#111">Anti-Aliasing</div>
<div class="a" style="left:791px;top:518px;width:38px;height:19px;border:1px solid #1a1a1a;border-radius:4px;background:linear-gradient(#4a4a4a,#3a3a3a)"></div>
<div class="a" style="left:800px;top:519px;width:9px;height:17px;background:linear-gradient(#6a94d6,#4b76b8)"></div>
<div class="a" style="left:809px;top:519px;width:1px;height:17px;background:#222"></div>
<div class="a" style="left:818px;top:519px;width:1px;height:17px;background:#222"></div>
<div class="t w" style="left:793px;top:522px;letter-spacing:3px">5811</div>
<div class="menu" style="left:837px;top:518px;width:39px;height:19px"></div>
<div class="t w" style="left:844px;top:522px">Mit</div>
<svg class="a" style="left:865px;top:521px" width="7" height="13"><path d="M0.5 5L3.5 0.5L6.5 5z M0.5 8L3.5 12.5L6.5 8z" fill="#aaa"/></svg>
<div class="a" style="left:793px;top:543px;width:15px;height:14px;border:1px solid #1a1a1a;border-radius:3px;background:linear-gradient(#4a4a4a,#3a3a3a)"></div>
<div class="t" style="left:815px;top:545px">Fu</div>
<div class="a" style="left:837px;top:541px;width:39px;height:20px;border:1px solid #333;border-radius:10px;background:linear-gradient(#a6a6a6,#b6b6b6)"></div>
<div class="t" style="left:849px;top:545px">1.</div>
<svg class="a" style="left:842px;top:546px" width="30" height="9"><path d="M4.5 0.5L0.5 4.5L4.5 8.5z" fill="#888"/><path d="M25.5 0.5L29.5 4.5L25.5 8.5z" fill="#888"/></svg>
<div class="a" style="left:788px;top:568px;width:92px;height:1px;background:#5a5a5a"></div><div class="a" style="left:788px;top:569px;width:92px;height:1px;background:#7e7e7e"></div>
<svg class="a" style="left:797px;top:573px" width="9" height="9"><path d="M0 0V8.5L8 4.25z" fill="#111"/></svg>
<div class="a" style="left:808px;top:573px;width:16px;height:16px;border:1px solid #1a1a1a;border-radius:3px;background:linear-gradient(#5a5a5a,#444)"></div>
<div class="t" style="left:828px;top:575px;font-size:12px;color:#111">Sampled Motion Blur</div>
<!-- properties scrollbar -->
<div class="a" style="left:880px;top:138px;width:19px;height:441px;background:#727272"></div>
<div class="a" style="left:885px;top:143px;width:12px;height:436px;border-radius:6px;background:#5e5e5e"></div>
<div class="a" style="left:885px;top:143px;width:12px;height:162px;border-radius:6px;border:1px solid #3a3a3a;background:linear-gradient(90deg,#999,#7e7e7e)"></div>
<svg class="a" style="left:784px;top:568px" width="11" height="11"><path d="M0 1L10 11M0 4L7 11M0 7L4 11" stroke="#bbb" stroke-width="1"/></svg>

<!-- ===== 3d view header ===== -->
<div class="hdr" style="left:3px;top:500px;width:779px;height:26px"></div>
<div class="a" style="left:3px;top:526px;width:779px;height:1px;background:#000"></div>

<!-- 3d header content -->
<div class="a" style="left:3px;top:500px;width:779px;height:1px;background:#7e7e7e"></div><div class="a" style="left:3px;top:501px;width:1px;height:25px;background:#828282"></div>
<svg class="a" style="left:3px;top:513px" width="13" height="13"><path d="M0 2L11 13M0 5L8 13M0 8L5 13M0 11L2 13" stroke="#aaa" stroke-width="1"/></svg>
<div class="menu" style="left:12px;top:503px;width:30px;height:20px"></div>
<svg class="a" style="left:16px;top:505px" width="15" height="16"><path d="M7.5 1L14 3.5V11L7.5 14.5L1 11V3.5z" fill="#eee" stroke="#111" stroke-width="1"/><path d="M7.5 6L14 3.5V11L7.5 14.5z" fill="#999"/><path d="M1 3.5L7.5 6L14 3.5M7.5 6V14.5" stroke="#111" stroke-width="0.6" fill="none"/></svg>
<svg class="a" style="left:32px;top:506px" width="7" height="13"><path d="M0.5 5L3.5 0.5L6.5 5z M0.5 8L3.5 12.5L6.5 8z" fill="#aaa"/></svg>
<div class="t" style="left:54px;top:508px">View</div>
<div class="t" style="left:99px;top:508px">Select</div>
<div class="t" style="left:150px;top:508px">Add</div>
<div class="t" style="left:189px;top:508px">Object</div>
<div class="menu" style="left:236px;top:503px;width:111px;height:20px"></div>
<svg class="a" style="left:240px;top:505px" width="15" height="16"><path d="M7.5 1L13.5 4V11.5L7.5 14.7L1.5 11.5V4z" fill="#e9a04e" stroke="#2a1a08" stroke-width="1"/><path d="M7.5 1L13.5 4L7.5 7.2L1.5 4z" fill="#f3c690"/><path d="M7.5 7.2L13.5 4V11.5L7.5 14.7z" fill="#c27422"/><path d="M1.8 4.2V11.3M1.8 4.2L7.5 7.2L13.3 4.2M7.5 7.2V14.5" stroke="#fff3e0" stroke-width="0.9" fill="none"/></svg>
<div class="t w" style="left:259px;top:508px">Object Mode</div>
<svg class="a" style="left:338px;top:506px" width="7" height="13"><path d="M0.5 5L3.5 0.5L6.5 5z M0.5 8L3.5 12.5L6.5 8z" fill="#aaa"/></svg>
<div class="menu" style="left:353px;top:503px;width:34px;height:20px"></div>
<svg class="a" style="left:358px;top:506px" width="14" height="14"><defs><radialGradient id="sph" cx="0.35" cy="0.3" r="0.8"><stop offset="0" stop-color="#fff"/><stop offset="0.6" stop-color="#ddd"/><stop offset="1" stop-color="#777"/></radialGradient></defs><circle cx="7" cy="7" r="6" fill="url(#sph)" stroke="#111" stroke-width="0.8"/></svg>
<svg class="a" style="left:376px;top:506px" width="7" height="13"><path d="M0.5 5L3.5 0.5L6.5 5z M0.5 8L3.5 12.5L6.5 8z" fill="#aaa"/></svg>
<div class="menu" style="left:393px;top:503px;width:54px;height:20px"></div>
<div class="a" style="left:428px;top:504px;width:18px;height:18px;border-radius:0 3px 3px 0;background:linear-gradient(#a8a8a8,#909090)"></div>
<div class="a" style="left:427px;top:504px;width:1px;height:18px;background:#1e1e1e"></div>
<svg class="a" style="left:396px;top:503px" width="18" height="19"><defs><radialGradient id="wsph" cx="0.35" cy="0.3" r="0.8"><stop offset="0" stop-color="#fff"/><stop offset="0.7" stop-color="#d8d8d8"/><stop offset="1" stop-color="#999"/></radialGradient></defs><circle cx="6" cy="6.3" r="4.6" fill="url(#wsph)" stroke="#111" stroke-width="1"/><circle cx="11" cy="12.7" r="4.6" fill="url(#wsph)" stroke="#111" stroke-width="1"/><rect x="6.5" y="8.5" width="3.5" height="3.5" fill="#fff" stroke="#1a5ae0" stroke-width="1.3"/></svg>
<svg class="a" style="left:418px;top:506px" width="7" height="13"><path d="M0.5 5L3.5 0.5L6.5 5z M0.5 8L3.5 12.5L6.5 8z" fill="#aaa"/></svg>
<svg class="a" style="left:428px;top:504px" width="18" height="18"><g fill="#cfe4ff" stroke="#1a4aa0" stroke-width="1"><circle cx="4" cy="4" r="1.8"/><circle cx="9" cy="4" r="1.8"/><circle cx="14" cy="4" r="1.8"/></g><path d="M2 11.5h14M2 11.5l3.5-3.5M2 11.5l3.5 3.5M16 11.5l-3.5-3.5M16 11.5l-3.5 3.5" stroke="#111" stroke-width="3" fill="none" stroke-linecap="round"/><path d="M2 11.5h14M2 11.5l3.5-3.5M2 11.5l3.5 3.5M16 11.5l-3.5-3.5M16 11.5l-3.5 3.5" stroke="#fff" stroke-width="1.3" fill="none" stroke-linecap="round"/></svg>
<div class="menu" style="left:453px;top:503px;width:152px;height:20px"></div>
<div class="a" style="left:473px;top:504px;width:20px;height:18px;background:linear-gradient(#6a94d6,#4b76b8)"></div>
<div class="a" style="left:473px;top:504px;width:1px;height:18px;background:#1e1e1e"></div>
<div class="a" style="left:492px;top:504px;width:1px;height:18px;background:#1e1e1e"></div>
<div class="a" style="left:512px;top:504px;width:1px;height:18px;background:#1e1e1e"></div>
<div class="a" style="left:532px;top:504px;width:1px;height:18px;background:#1e1e1e"></div>
<svg class="a" style="left:455px;top:504px" width="17" height="18"><path d="M8.5 10V2" stroke="#2040e0" stroke-width="2"/><path d="M8.5 10L2.5 15" stroke="#e02020" stroke-width="2"/><path d="M8.5 10L14.5 15" stroke="#60d020" stroke-width="2"/><circle cx="8.5" cy="10" r="1.3" fill="#fff"/></svg>
<svg class="a" style="left:475px;top:505px" width="16" height="16"><path d="M2 14L12 4M7 3.5h6v6" stroke="#111" stroke-width="3.2" fill="none"/><path d="M2 14L12 4M7 3.5h6v6" stroke="#cde" stroke-width="1.4" fill="none"/></svg>
<svg class="a" style="left:495px;top:505px" width="16" height="16"><path d="M2.5 14Q3 5 13 3" stroke="#111" stroke-width="3" fill="none"/><path d="M2.5 14Q3 5 13 3" stroke="#6a8ab8" stroke-width="1.6" fill="none"/></svg>
<svg class="a" style="left:515px;top:505px" width="16" height="16"><path d="M2.5 14L9 7.5M8.5 3.5h5v5h-5z" stroke="#111" stroke-width="2.6" fill="none"/><path d="M2.5 14L9 7.5" stroke="#6a8ab8" stroke-width="1.3"/><rect x="8.5" y="3.5" width="5" height="5" fill="#6a8ab8"/></svg>
<div class="t w" style="left:540px;top:508px">Global</div>
<svg class="a" style="left:593px;top:506px" width="7" height="13"><path d="M0.5 5L3.5 0.5L6.5 5z M0.5 8L3.5 12.5L6.5 8z" fill="#aaa"/></svg>
<div class="a" style="left:610px;top:503px;width:50px;height:20px;border:1px solid #2a2a2a;border-radius:4px;overflow:hidden;background:linear-gradient(#8e8e8e,#7e7e7e)"><div class="a" style="left:9px;top:0;width:1px;height:18px;background:#3a3a3a"></div><div class="a" style="left:19px;top:0;width:1px;height:18px;background:#3a3a3a"></div><div class="a" style="left:29px;top:0;width:1px;height:18px;background:#3a3a3a"></div><div class="a" style="left:39px;top:0;width:1px;height:18px;background:#3a3a3a"></div><div class="a" style="left:0;top:9px;width:48px;height:1px;background:#3a3a3a"></div></div>
<div class="a" style="left:665px;top:503px;width:50px;height:20px;border:1px solid #2a2a2a;border-radius:4px;overflow:hidden;background:linear-gradient(#8e8e8e,#7e7e7e)"><div class="a" style="left:9px;top:0;width:1px;height:18px;background:#3a3a3a"></div><div class="a" style="left:19px;top:0;width:1px;height:18px;background:#3a3a3a"></div><div class="a" style="left:29px;top:0;width:1px;height:18px;background:#3a3a3a"></div><div class="a" style="left:39px;top:0;width:1px;height:18px;background:#3a3a3a"></div><div class="a" style="left:0;top:9px;width:48px;height:1px;background:#3a3a3a"></div></div>
<svg class="a" style="left:613px;top:505px" width="6" height="6"><circle cx="3" cy="3" r="2.2" fill="#f09030" stroke="#222" stroke-width="0.6"/></svg>
<div class="menu" style="left:720px;top:503px;width:20px;height:20px;background:linear-gradient(#5a5a5a,#484848)"></div>
<svg class="a" style="left:722px;top:505px" width="16" height="16"><rect x="1.5" y="2.5" width="10" height="9" fill="#ccc" stroke="#222" stroke-width="0.8"/><rect x="2.5" y="3.5" width="8" height="7" fill="#aaa"/><rect x="10" y="5" width="3.5" height="4.5" rx="1.7" fill="none" stroke="#111" stroke-width="2"/><rect x="10" y="9" width="3.5" height="4.5" rx="1.7" fill="none" stroke="#111" stroke-width="2"/><rect x="10" y="5" width="3.5" height="4.5" rx="1.7" fill="none" stroke="#fff" stroke-width="0.8"/><rect x="10" y="9" width="3.5" height="4.5" rx="1.7" fill="none" stroke="#fff" stroke-width="0.8"/></svg>
<div class="btn" style="left:745px;top:503px;width:20px;height:20px"></div>
<svg class="a" style="left:747px;top:505px" width="16" height="16"><circle cx="8" cy="8" r="5.5" fill="none" stroke="#777" stroke-width="1.5"/><circle cx="8" cy="8" r="2.5" fill="none" stroke="#777" stroke-width="1.3"/></svg>
<div class="a" style="left:770px;top:503px;width:12px;height:20px;overflow:hidden"><div class="btn" style="left:0;top:0;width:20px;height:20px"></div></div>
<svg class="a" style="left:772px;top:505px" width="10" height="16"><path d="M2 12L8 5" stroke="#eee" stroke-width="3"/><path d="M2 12L8 5" stroke="#555" stroke-width="1" /></svg>
<!-- ===== timeline ===== -->
<div class="a" style="left:3px;top:527px;width:779px;height:29px;background:#727272"></div>
<div class="a" style="left:3px;top:527px;width:135px;height:12px;background:#474747"></div>
<div class="a" style="left:138px;top:527px;width:568px;height:12px;background:#717171"></div>
<div class="a" style="left:706px;top:527px;width:76px;height:12px;background:#474747"></div>
<div class="a" style="left:23px;top:527px;width:1px;height:12px;background:#3a3a3a"></div><div class="a" style="left:46px;top:527px;width:1px;height:12px;background:#3a3a3a"></div><div class="a" style="left:69px;top:527px;width:1px;height:12px;background:#3a3a3a"></div><div class="a" style="left:91px;top:527px;width:1px;height:12px;background:#3a3a3a"></div><div class="a" style="left:114px;top:527px;width:1px;height:12px;background:#3a3a3a"></div><div class="a" style="left:159px;top:527px;width:1px;height:12px;background:#5c5c5c"></div><div class="a" style="left:182px;top:527px;width:1px;height:12px;background:#5c5c5c"></div><div class="a" style="left:205px;top:527px;width:1px;height:12px;background:#5c5c5c"></div><div class="a" style="left:227px;top:527px;width:1px;height:12px;background:#5c5c5c"></div><div class="a" style="left:250px;top:527px;width:1px;height:12px;background:#5c5c5c"></div><div class="a" style="left:273px;top:527px;width:1px;height:12px;background:#5c5c5c"></div><div class="a" style="left:295px;top:527px;width:1px;height:12px;background:#5c5c5c"></div><div class="a" style="left:318px;top:527px;width:1px;height:12px;background:#5c5c5c"></div><div class="a" style="left:341px;top:527px;width:1px;height:12px;background:#5c5c5c"></div><div class="a" style="left:363px;top:527px;width:1px;height:12px;background:#5c5c5c"></div><div class="a" style="left:386px;top:527px;width:1px;height:12px;background:#5c5c5c"></div><div class="a" style="left:408px;top:527px;width:1px;height:12px;background:#5c5c5c"></div><div class="a" style="left:431px;top:527px;width:1px;height:12px;background:#5c5c5c"></div><div class="a" style="left:454px;top:527px;width:1px;height:12px;background:#5c5c5c"></div><div class="a" style="left:476px;top:527px;width:1px;height:12px;background:#5c5c5c"></div><div class="a" style="left:499px;top:527px;width:1px;height:12px;background:#5c5c5c"></div><div class="a" style="left:522px;top:527px;width:1px;height:12px;background:#5c5c5c"></div><div class="a" style="left:544px;top:527px;width:1px;height:12px;background:#5c5c5c"></div><div class="a" style="left:567px;top:527px;width:1px;height:12px;background:#5c5c5c"></div><div class="a" style="left:590px;top:527px;width:1px;height:12px;background:#5c5c5c"></div><div class="a" style="left:612px;top:527px;width:1px;height:12px;background:#5c5c5c"></div><div class="a" style="left:635px;top:527px;width:1px;height:12px;background:#5c5c5c"></div><div class="a" style="left:658px;top:527px;width:1px;height:12px;background:#5c5c5c"></div><div class="a" style="left:680px;top:527px;width:1px;height:12px;background:#5c5c5c"></div><div class="a" style="left:703px;top:527px;width:1px;height:12px;background:#5c5c5c"></div><div class="a" style="left:726px;top:527px;width:1px;height:12px;background:#3a3a3a"></div><div class="a" style="left:748px;top:527px;width:1px;height:12px;background:#3a3a3a"></div><div class="a" style="left:771px;top:527px;width:1px;height:12px;background:#3a3a3a"></div>
<div class="a" style="left:136px;top:527px;width:3px;height:12px;background:#60d040"></div>
<svg class="a" style="left:770px;top:527px" width="12" height="12"><path d="M1 0L12 11M4 0L12 8M7 0L12 5M10 0L12 2" stroke="#bbb" stroke-width="1"/></svg>
<div class="a" style="left:7px;top:540px;width:771px;height:12px;border-radius:6px;border:1px solid #555;background:linear-gradient(#a6a6a6,#8a8a8a)"></div>
<div class="a" style="left:8px;top:541px;width:10px;height:10px;border-radius:5px;background:#777"></div>
<div class="a" style="left:767px;top:541px;width:10px;height:10px;border-radius:5px;background:#777"></div>
<div class="t" style="left:23.8px;top:540px;width:40px;text-align:center;font-size:12px">-40</div><div class="t" style="left:68.9px;top:540px;width:40px;text-align:center;font-size:12px">-20</div><div class="t" style="left:117.5px;top:540px;width:40px;text-align:center;font-size:12px">0</div><div class="t" style="left:162.6px;top:540px;width:40px;text-align:center;font-size:12px">20</div><div class="t" style="left:207.7px;top:540px;width:40px;text-align:center;font-size:12px">40</div><div class="t" style="left:252.7px;top:540px;width:40px;text-align:center;font-size:12px">60</div><div class="t" style="left:297.8px;top:540px;width:40px;text-align:center;font-size:12px">80</div><div class="t" style="left:342.9px;top:540px;width:40px;text-align:center;font-size:12px">100</div><div class="t" style="left:388.0px;top:540px;width:40px;text-align:center;font-size:12px">120</div><div class="t" style="left:433.1px;top:540px;width:40px;text-align:center;font-size:12px">140</div><div class="t" style="left:478.1px;top:540px;width:40px;text-align:center;font-size:12px">160</div><div class="t" style="left:523.2px;top:540px;width:40px;text-align:center;font-size:12px">180</div><div class="t" style="left:568.3px;top:540px;width:40px;text-align:center;font-size:12px">200</div><div class="t" style="left:613.4px;top:540px;width:40px;text-align:center;font-size:12px">220</div><div class="t" style="left:658.5px;top:540px;width:40px;text-align:center;font-size:12px">240</div><div class="t" style="left:703.5px;top:540px;width:40px;text-align:center;font-size:12px">260</div>
<div class="a" style="left:3px;top:553px;width:779px;height:1px;background:#858585"></div>
<div class="a" style="left:3px;top:555px;width:779px;height:1px;background:#5a5a5a"></div>
<div class="a" style="left:3px;top:556px;width:779px;height:23px;background:#696969"></div>
<svg class="a" style="left:3px;top:567px" width="12" height="12"><path d="M0 1L11 12M0 4L8 12M0 7L5 12M0 10L2 12" stroke="#aaa" stroke-width="1"/></svg>
<div class="menu" style="left:12px;top:559px;width:30px;height:20px"></div>
<svg class="a" style="left:17px;top:562px" width="14" height="14"><circle cx="7" cy="7" r="6.2" fill="#e4e4e4" stroke="#111" stroke-width="1.2"/><path d="M6.8 7L9.8 3.8" stroke="#333" stroke-width="1"/><path d="M6.8 7L9.3 9.5" stroke="#d01010" stroke-width="1.6"/></svg>
<svg class="a" style="left:32px;top:562px" width="7" height="13"><path d="M0.5 5L3.5 0.5L6.5 5z M0.5 8L3.5 12.5L6.5 8z" fill="#aaa"/></svg>
<div class="t" style="left:54px;top:564px">View</div>
<div class="t" style="left:99px;top:564px">Marker</div>
<div class="t" style="left:154px;top:564px">Frame</div>
<div class="t" style="left:206px;top:564px">Playback</div>
<div class="btn" style="left:264px;top:560px;width:40px;height:19px"></div>
<div class="a" style="left:283px;top:561px;width:1px;height:17px;background:#1e1e1e"></div>
<svg class="a" style="left:266px;top:562px" width="16" height="16"><circle cx="8" cy="8" r="6" fill="#eee" stroke="#222" stroke-width="1"/><path d="M8 8V2.2A5.8 5.8 0 0 1 13.8 8z" fill="#f0a020"/><path d="M8 8L10.5 11" stroke="#d02020" stroke-width="1.3"/></svg>
<svg class="a" style="left:286px;top:562px" width="15" height="16"><path d="M4.5 7V5A3 3 0 0 1 10.5 5V7" stroke="#111" stroke-width="2.4" fill="none"/><path d="M4.5 7V5A3 3 0 0 1 10.5 5V7" stroke="#eee" stroke-width="1" fill="none"/><rect x="2.5" y="7.5" width="10" height="7" fill="#eee" stroke="#222" stroke-width="0.8"/><rect x="7" y="10" width="1.5" height="2" fill="#222"/></svg>
<div class="a" style="left:309px;top:559px;width:227px;height:19px;border:1px solid #1e1e1e;border-radius:9px;overflow:hidden;background:linear-gradient(#a0a0a0,#b4b4b4)"><div class="a" style="left:115px;top:0;width:1px;height:17px;background:#1e1e1e"></div></div>
<svg class="a" style="left:314px;top:565px" width="6" height="8"><path d="M5 0.5L0.5 4L5 7.5z" fill="#777"/></svg>
<svg class="a" style="left:416px;top:565px" width="6" height="8"><path d="M1 0.5L5.5 4L1 7.5z" fill="#777"/></svg>
<svg class="a" style="left:429px;top:565px" width="6" height="8"><path d="M5 0.5L0.5 4L5 7.5z" fill="#777"/></svg>
<svg class="a" style="left:525px;top:565px" width="6" height="8"><path d="M1 0.5L5.5 4L1 7.5z" fill="#777"/></svg>
<div class="t" style="left:325px;top:564px">Start:</div>
<div class="t" style="left:380px;top:564px;width:30px;text-align:right">1</div>
<div class="t" style="left:441px;top:564px">End:</div>
<div class="t" style="left:480px;top:564px;width:41px;text-align:right">250</div>
<div class="a" style="left:542px;top:559px;width:90px;height:19px;border:1px solid #1e1e1e;border-radius:9px;background:linear-gradient(#a0a0a0,#b4b4b4)"></div>
<svg class="a" style="left:546px;top:565px" width="6" height="8"><path d="M5 0.5L0.5 4L5 7.5z" fill="#777"/></svg>
<svg class="a" style="left:620px;top:565px" width="6" height="8"><path d="M1 0.5L5.5 4L1 7.5z" fill="#777"/></svg>
<div class="t" style="left:585px;top:564px;width:30px;text-align:right">1</div>
<div class="btn" style="left:648px;top:559px;width:120px;height:20px"></div>
<div class="a" style="left:667px;top:560px;width:1px;height:18px;background:#1e1e1e"></div><div class="a" style="left:687px;top:560px;width:1px;height:18px;background:#1e1e1e"></div><div class="a" style="left:707px;top:560px;width:1px;height:18px;background:#1e1e1e"></div><div class="a" style="left:727px;top:560px;width:1px;height:18px;background:#1e1e1e"></div><div class="a" style="left:747px;top:560px;width:1px;height:18px;background:#1e1e1e"></div>
<svg class="a" style="left:648px;top:559px" width="120" height="20"><g fill="#fff" stroke="#111" stroke-width="0.9" stroke-linejoin="round">
<path d="M4 5h1.5v10H4z M6 10L10.5 5.5v9z M10.5 10L15 5.5v9z"/>
<path d="M26 10L30.5 5.5v9z M30.5 10L35 5.5v9z"/>
<path d="M44 10L53 3.5v13z"/>
<path d="M65 3.5L74 10L65 16.5z"/>
<path d="M84 5.5L88.5 10L84 14.5z M88.5 5.5L93 10L88.5 14.5z"/>
<path d="M104 5.5L108.5 10L104 14.5z M108.5 5.5L113 10L108.5 14.5z M114 5h1.5v10H114z"/>
</g></svg>
<div class="a" style="left:774px;top:559px;width:8px;height:20px;overflow:hidden"><div class="menu" style="left:0;top:0;width:20px;height:20px"></div></div>

</div></body></html>
